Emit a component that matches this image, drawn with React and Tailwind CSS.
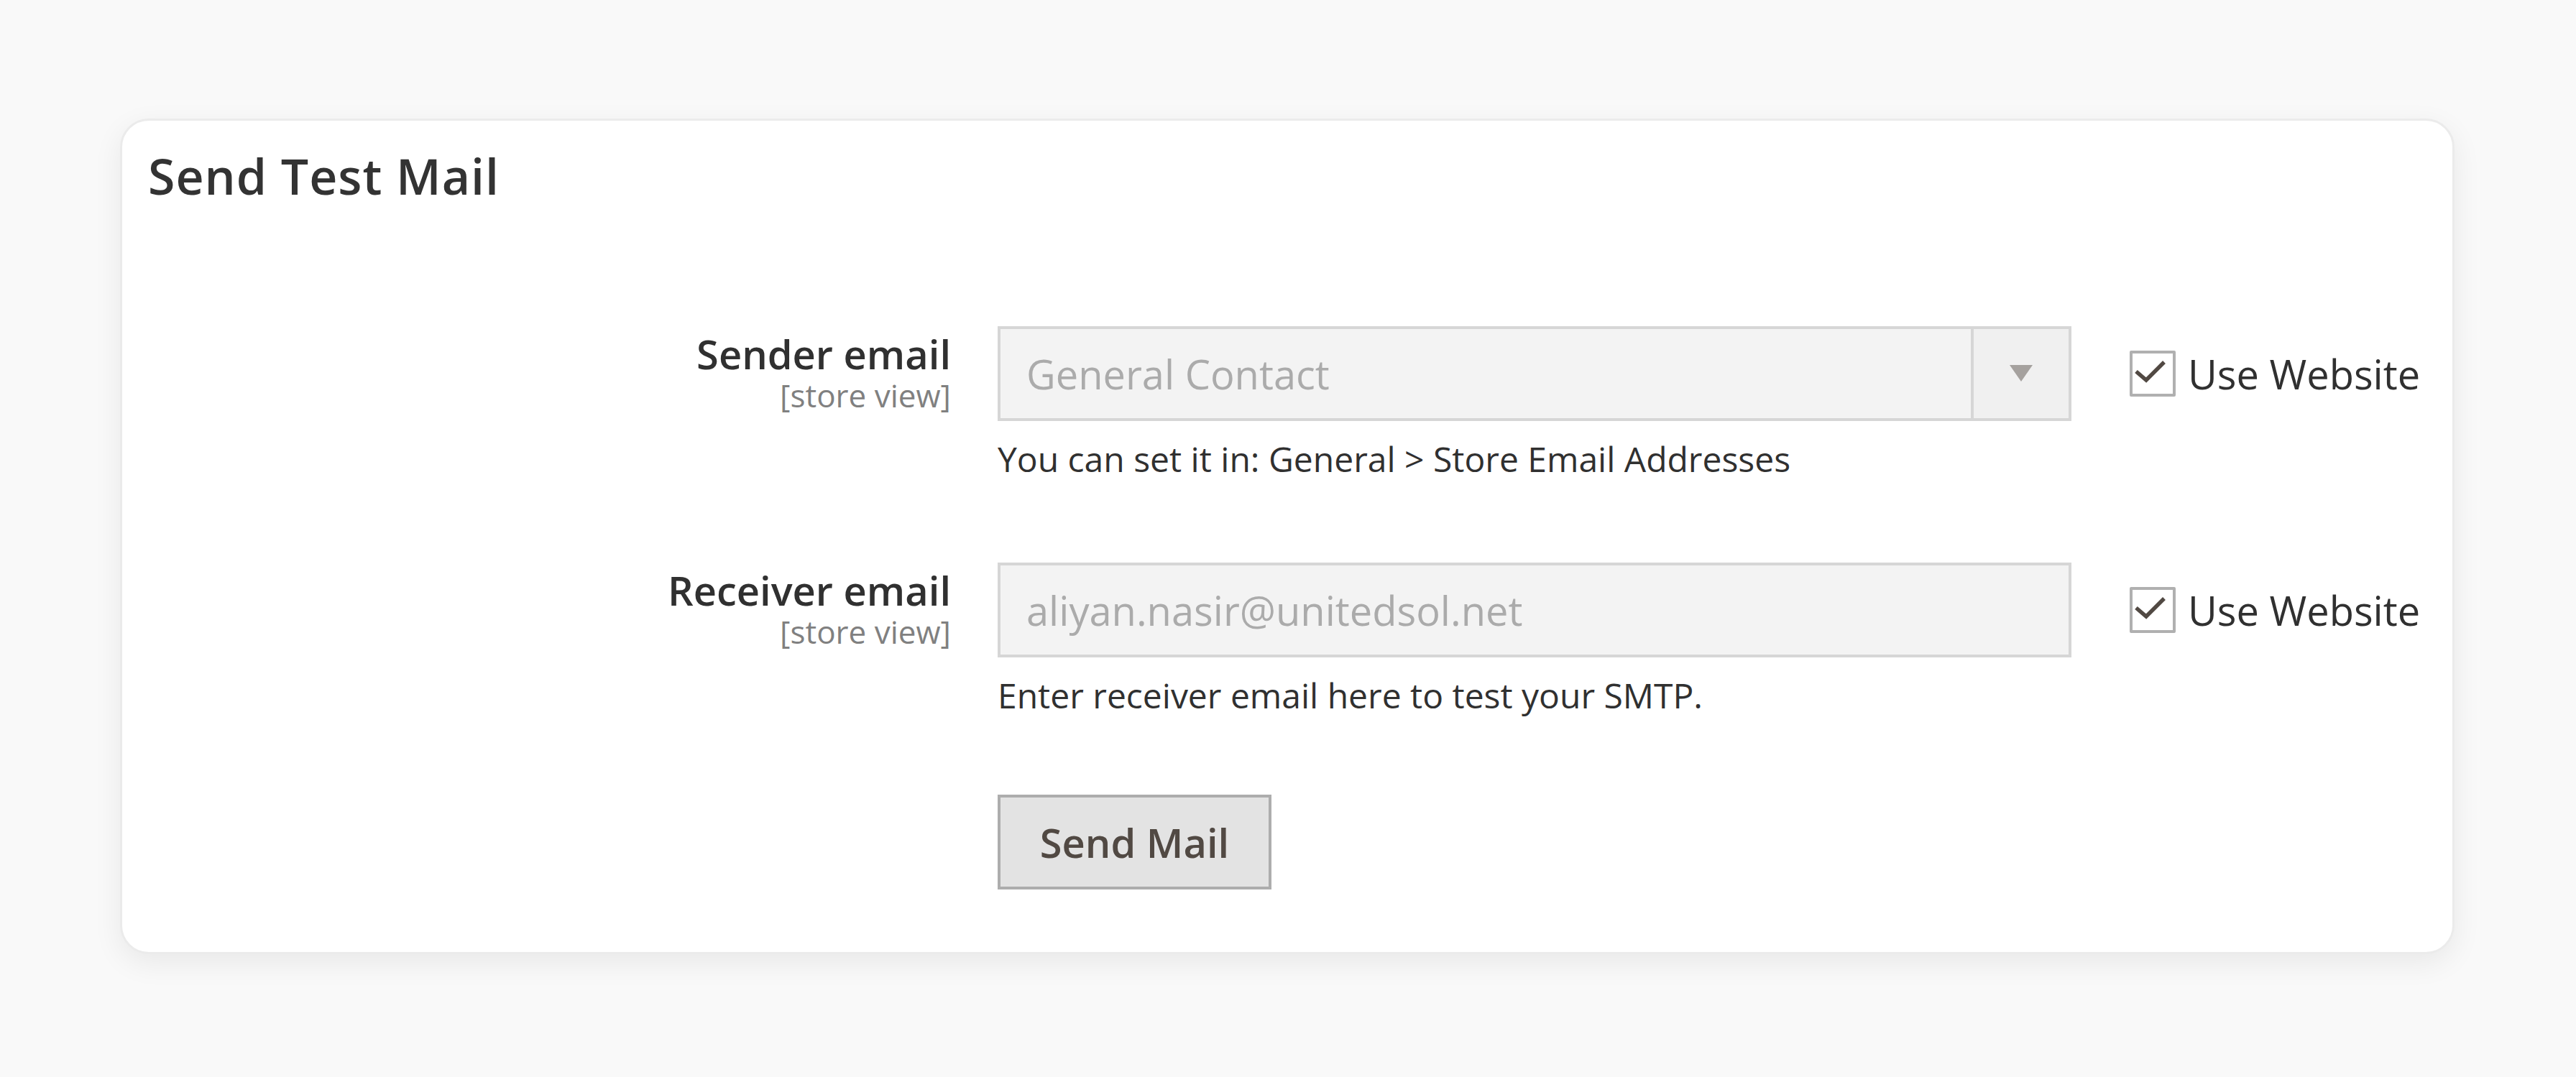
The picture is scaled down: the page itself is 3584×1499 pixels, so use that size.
const font = { fontFamily: '"Open Sans", "Noto Sans", sans-serif' }

function UseWebsite() {
  return (
    <label className="ml-[81px] flex items-center cursor-pointer">
      <span className="w-[64px] h-[64px] border-[4px] border-[#b0b0b0] rounded-[2px] bg-white flex items-center justify-center">
        <svg width="56" height="56" viewBox="0 0 56 56">
          <path d="M5 25 L19 37 L44 12" fill="none" stroke="#514943" strokeWidth="5.5" />
        </svg>
      </span>
      <span className="ml-[17px] text-[56px] leading-[76px] text-[#303030]">Use Website</span>
    </label>
  )
}

function Row({ label, children, note, className }) {
  return (
    <div className={`flex ${className || ''}`}>
      <div className="w-[1153px] text-right pt-[4px]">
        <div className="text-[56px] leading-[68px] font-semibold text-[#303030]">{label}</div>
        <div className="text-[44px] leading-[48px] text-[#808080]">[store view]</div>
      </div>
      <div className="ml-[65px] flex flex-col">
        <div className="flex items-center">
          {children}
          <UseWebsite />
        </div>
        <p className="mt-[21px] text-[48px] leading-[64px] text-[#303030]">{note}</p>
      </div>
    </div>
  )
}

export default function App() {
  return (
    <div style={font} className="w-full h-[1499px] bg-[#f9f9f9] pl-[167px] pt-[165px]">
      <div className="w-[3248px] bg-white border-[3px] border-[#ebebeb] rounded-[40px] shadow-[0_12px_40px_rgba(0,0,0,0.07)] pt-[36px] pb-[87px]">
        <h2 className="pl-[36px] text-[68px] leading-[82px] font-semibold text-[#333333] tracking-[1px]">Send Test Mail</h2>

        <div className="mt-[168px]">
          <Row label="Sender email" note="You can set it in: General > Store Email Addresses">
            <div className="w-[1494px] h-[132px] border-[4px] border-[#d6d6d6] bg-[#f3f3f3] flex">
              <div className="flex-1 flex items-center pl-[36px] text-[56px] text-[#ababab]">General Contact</div>
              <div className="w-[136px] border-l-[4px] border-[#d6d6d6] bg-[#f0f0f0] flex items-center justify-center">
                <svg width="32" height="24" viewBox="0 0 32 24">
                  <path d="M0 0 H32 L16 23 Z" fill="#a5a19e" />
                </svg>
              </div>
            </div>
          </Row>

          <Row className="mt-[112px]" label="Receiver email" note="Enter receiver email here to test your SMTP.">
            <div className="w-[1494px] h-[132px] border-[4px] border-[#d6d6d6] bg-[#f3f3f3] flex items-center pl-[36px] text-[56px] text-[#ababab]">
              aliyan.nasir@unitedsol.net
            </div>
          </Row>

          <div className="flex mt-[106px]">
            <div className="w-[1153px]" />
            <button className="ml-[65px] w-[381px] h-[132px] border-[4px] border-[#adadad] bg-[#e3e3e3] text-[56px] font-semibold text-[#514943]">
              Send Mail
            </button>
          </div>
        </div>
      </div>
    </div>
  )
}
